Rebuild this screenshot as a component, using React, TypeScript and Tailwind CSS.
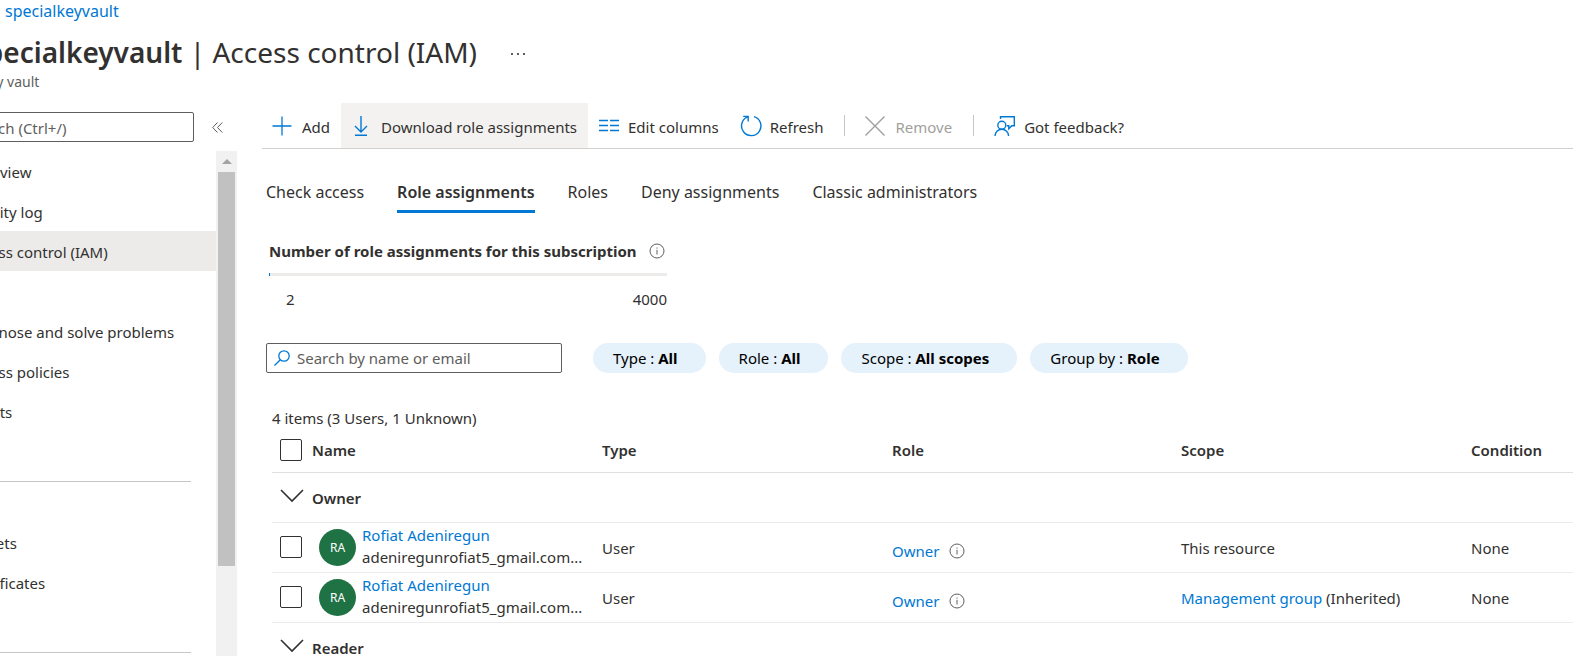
import React from 'react';

const navItems = [
  { label: 'Overview' },
  { label: 'Activity log' },
  { label: 'Access control (IAM)', active: true },
  { label: '' },
  { label: 'Diagnose and solve problems' },
  { label: 'Access policies' },
  { label: 'Events' },
  { divider: true },
  { label: '' },
  { label: 'Secrets' },
  { label: 'Certificates' },
  { divider: true },
];

const tabs = ['Check access', 'Role assignments', 'Roles', 'Deny assignments', 'Classic administrators'];

const filters = [
  { name: 'Type', value: 'All' },
  { name: 'Role', value: 'All' },
  { name: 'Scope', value: 'All scopes' },
  { name: 'Group by', value: 'Role' },
];

const owners = [
  { id: 1, name: 'Rofiat Adeniregun', email: 'adeniregunrofiat5_gmail.com...', scope: 'This resource' },
  { id: 2, name: 'Rofiat Adeniregun', email: 'adeniregunrofiat5_gmail.com...', scopeLink: 'Management group', scope: '(Inherited)' },
];

const InfoIcon: React.FC = () => (
  <svg width="16" height="16" viewBox="0 0 16 16" fill="none" stroke="#605e5c" className="shrink-0">
    <circle cx="8" cy="8" r="7" />
    <path d="M8 6.8V11.5M8 4.5V5.6" />
  </svg>
);

const AddIcon = () => (
  <svg width="20" height="20" viewBox="0 0 20 20" fill="none" stroke="#0078d4" strokeWidth="1.3">
    <path d="M10 0.5V19.5M0.5 10H19.5" />
  </svg>
);

const DownloadIcon = () => (
  <svg width="20" height="20" viewBox="0 0 20 20" fill="none" stroke="#0078d4" strokeWidth="1.4">
    <path d="M10 0V16M4 10L10 16L16 10M4 19.3H16" />
  </svg>
);

const ColumnsIcon = () => (
  <svg width="22" height="20" viewBox="0 0 22 20" fill="none" stroke="#0078d4" strokeWidth="1.3">
    <path d="M1 4.5H10M1 9.5H10M1 14.5H10M12 4.5H21M12 9.5H21M12 14.5H21" />
  </svg>
);

const RefreshIcon = () => (
  <svg width="22" height="22" viewBox="0 0 22 22" fill="none" stroke="#0078d4" strokeWidth="1.4">
    <path d="M14 1.6A9.7 9.7 0 1 1 7.6 1.9M3.2 1.4H8.2V6.4" />
  </svg>
);

const RemoveIcon = () => (
  <svg width="20" height="20" viewBox="0 0 20 20" fill="none" stroke="#a19f9d" strokeWidth="1.4">
    <path d="M0.5 0.5L19.5 19.5M19.5 0.5L0.5 19.5" />
  </svg>
);

const FeedbackIcon = () => (
  <svg width="22" height="22" viewBox="0 0 22 22" fill="none" stroke="#0078d4" strokeWidth="1.4">
    <path d="M6.5 4V1.7H20.3V10.7H17.8L14.8 13.7V10.7H12.8" />
    <circle cx="7.8" cy="10.3" r="4" />
    <path d="M1 21C1 17 4 14.3 7.8 14.3S14.6 17 14.6 21" />
  </svg>
);

const ChevronIcon = () => (
  <svg width="24" height="14" viewBox="0 0 24 14" fill="none" stroke="#323130" strokeWidth="1.6">
    <path d="M1 1L12 12L23 1" />
  </svg>
);

const CollapseIcon = () => (
  <svg width="11" height="11" viewBox="0 0 11 11" fill="none" stroke="#605e5c">
    <path d="M5.5 0.5L0.7 5.5L5.5 10.5M10.3 0.5L5.5 5.5L10.3 10.5" />
  </svg>
);

const SearchIcon = () => (
  <svg width="16" height="16" viewBox="0 0 16 16" fill="none" stroke="#0078d4" strokeWidth="1.3">
    <circle cx="10" cy="6" r="5.2" />
    <path d="M6.3 9.7L0.5 15.5" />
  </svg>
);

const CheckBox: React.FC<{ label: string }> = ({ label }) => (
  <input
    type="checkbox"
    aria-label={label}
    className="block size-[22px] appearance-none rounded-[2px] border border-[#323130] bg-white"
  />
);

const GroupRow: React.FC<{ label: string }> = ({ label }) => (
  <tr className="h-[50px] border-b border-[#edebe9]">
    <td className="pl-2">
      <button type="button" aria-label={`Collapse ${label}`} className="block pb-0.5">
        <ChevronIcon />
      </button>
    </td>
    <td colSpan={5} className="pt-0.5 font-semibold">{label}</td>
  </tr>
);

const App: React.FC = () => {
  return (
    <div className="h-screen overflow-hidden bg-white font-['Noto_Sans','Open_Sans',sans-serif] text-[15px] leading-[22px] text-[#323130]">
      {/* the blade is scrolled sideways, so its left edge is out of view */}
      <div className="-ml-20 flex h-full flex-col">
        <header className="h-[103px] shrink-0 pl-[52px]">
          <a href="#" className="ml-[33px] block w-fit text-base leading-[22px] text-[#0078d4]">specialkeyvault</a>
          <div className="mt-2 flex items-center gap-8">
            <h1 className="text-[28px] leading-[44px]">
              <span className="font-semibold">specialkeyvault</span> | Access control (IAM)
            </h1>
            <button type="button" aria-label="More" className="flex gap-1 pt-1 pl-0.5">
              <span className="size-0.5 bg-[#605e5c]" />
              <span className="size-0.5 bg-[#605e5c]" />
              <span className="size-0.5 bg-[#605e5c]" />
            </button>
          </div>
          <p className="ml-2 text-sm leading-4 text-[#605e5c]">Key vault</p>
        </header>

        <div className="flex min-h-0 flex-1">
          <aside className="flex w-[317px] shrink-0 flex-col">
            <div className="flex h-12 shrink-0 items-center gap-[18px]">
              <input
                type="text"
                aria-label="Search menu"
                placeholder="Search (Ctrl+/)"
                className="h-[30px] w-[274px] rounded-[2px] border border-[#605e5c] pt-0.5 pl-[46px] placeholder:text-[#605e5c]"
              />
              <button type="button" aria-label="Collapse menu">
                <CollapseIcon />
              </button>
            </div>
            <div className="flex min-h-0 flex-1">
              <nav className="flex-1 overflow-hidden">
                {navItems.map((item, i) =>
                  item.divider ? (
                    <div key={i} className="mr-[25px] h-[51px] border-b border-[#c8c6c4]" />
                  ) : item.label ? (
                    <a
                      key={i}
                      href="#"
                      className={`flex h-10 items-center pt-0.5 pl-[46px] ${item.active ? 'bg-[#edebe9]' : ''}`}
                    >
                      {item.label}
                    </a>
                  ) : (
                    <div key={i} className="h-10" />
                  )
                )}
              </nav>
              <div className="w-[21px] bg-[#f1f1f1] px-0.5">
                <div className="flex h-[21px] items-center justify-center">
                  <svg width="10" height="5" viewBox="0 0 10 5" fill="#a3a3a3">
                    <path d="M0 5L5 0L10 5Z" />
                  </svg>
                </div>
                <div className="h-[78%] bg-[#c1c1c1]" />
              </div>
            </div>
          </aside>

          <main className="ml-[25px] min-w-0 flex-1">
            <div className="flex h-[46px] items-center border-b border-[#d2d0ce]">
              <button type="button" className="flex h-full items-center gap-2.5 pr-[11px] pl-2.5">
                <AddIcon />
                <span className="pt-0.5">Add</span>
              </button>
              <button type="button" className="flex h-full items-center gap-2.5 bg-[#f3f2f1] pr-[11px] pl-2.5">
                <DownloadIcon />
                <span className="pt-0.5">Download role assignments</span>
              </button>
              <button type="button" className="flex h-full items-center gap-2 pr-[11px] pl-2.5">
                <ColumnsIcon />
                <span className="pt-0.5">Edit columns</span>
              </button>
              <button type="button" className="flex h-full items-center gap-2 pr-[11px] pl-2.5">
                <RefreshIcon />
                <span className="pt-0.5">Refresh</span>
              </button>
              <span className="mx-2.5 h-[21px] w-px bg-[#c8c6c4]" />
              <button type="button" disabled className="flex h-full items-center gap-2.5 pr-[11px] pl-2.5 text-[#a19f9d]">
                <RemoveIcon />
                <span className="pt-0.5">Remove</span>
              </button>
              <span className="mx-2.5 h-[21px] w-px bg-[#c8c6c4]" />
              <button type="button" className="flex h-full items-center gap-2 pr-[11px] pl-2.5">
                <FeedbackIcon />
                <span className="pt-0.5">Got feedback?</span>
              </button>
            </div>

            <div className="mt-5 flex gap-[33px] pl-1 text-base" role="tablist">
              {tabs.map(tab => (
                <button
                  key={tab}
                  type="button"
                  role="tab"
                  aria-selected={tab === 'Role assignments'}
                  className={`h-11 border-b-[3px] pt-1 ${
                    tab === 'Role assignments' ? 'border-[#0078d4] font-semibold' : 'border-transparent'
                  }`}
                >
                  {tab}
                </button>
              ))}
            </div>

            <section className="mt-[27px] ml-[7px] w-[398px]">
              <h2 className="flex items-center gap-3 font-bold whitespace-nowrap">
                Number of role assignments for this subscription
                <InfoIcon />
              </h2>
              <div className="mt-[11px] h-[3px] bg-[#edebe9]">
                <div className="h-full w-px bg-[#0078d4]" />
              </div>
              <div className="mt-3 flex justify-between pl-[17px]">
                <span>2</span>
                <span>4000</span>
              </div>
            </section>

            <div className="mt-[33px] ml-1 flex gap-[31px]">
              <label className="flex h-[30px] w-[296px] items-center gap-[7px] rounded-[2px] border border-[#605e5c] pl-[7px]">
                <SearchIcon />
                <input
                  type="text"
                  aria-label="Search by name or email"
                  placeholder="Search by name or email"
                  className="min-w-0 flex-1 outline-none placeholder:text-[#605e5c]"
                />
              </label>
              <div className="flex gap-[13px]">
                {filters.map(filter => (
                  <button
                    key={filter.name}
                    type="button"
                    className="h-[30px] rounded-full bg-[#e5f1fb] pr-7 pl-5 text-black"
                  >
                    {filter.name} : <b>{filter.value}</b>
                  </button>
                ))}
              </div>
            </div>

            <p className="mt-[34px] ml-2.5">4 items (3 Users, 1 Unknown)</p>
            <table className="ml-2.5 w-full table-fixed border-collapse text-left">
              <colgroup>
                <col className="w-10" />
                <col className="w-[290px]" />
                <col className="w-[290px]" />
                <col className="w-[289px]" />
                <col className="w-[290px]" />
                <col />
              </colgroup>
              <thead>
                <tr className="h-[43px] border-b border-[#e1dfdd]">
                  <th className="pl-2"><CheckBox label="Select all" /></th>
                  <th className="font-semibold">Name</th>
                  <th className="font-semibold">Type</th>
                  <th className="font-semibold">Role</th>
                  <th className="font-semibold">Scope</th>
                  <th className="font-semibold">Condition</th>
                </tr>
              </thead>
              <tbody>
                <GroupRow label="Owner" />
                {owners.map(row => (
                  <tr key={row.id} className="h-[50px] border-b border-[#edebe9]">
                    <td className="pl-2"><CheckBox label={`Select ${row.name}`} /></td>
                    <td>
                      <div className="flex items-center gap-1.5 pl-[7px]">
                        <span className="flex size-[37px] shrink-0 items-center justify-center rounded-full bg-[#1f7244] pt-0.5 text-xs text-white">
                          RA
                        </span>
                        <div className="pb-0.5">
                          <a href="#" className="block text-[#0078d4]">{row.name}</a>
                          <div>{row.email}</div>
                        </div>
                      </div>
                    </td>
                    <td className="pt-0.5">User</td>
                    <td>
                      <div className="flex items-center gap-2.5 pt-2">
                        <a href="#" className="text-[#0078d4]">Owner</a>
                        <InfoIcon />
                      </div>
                    </td>
                    <td className="pt-0.5">
                      {row.scopeLink && <a href="#" className="text-[#0078d4]">{row.scopeLink}</a>} {row.scope}
                    </td>
                    <td className="pt-0.5">None</td>
                  </tr>
                ))}
                <GroupRow label="Reader" />
              </tbody>
            </table>
          </main>
        </div>
      </div>
    </div>
  );
};

export default App;
